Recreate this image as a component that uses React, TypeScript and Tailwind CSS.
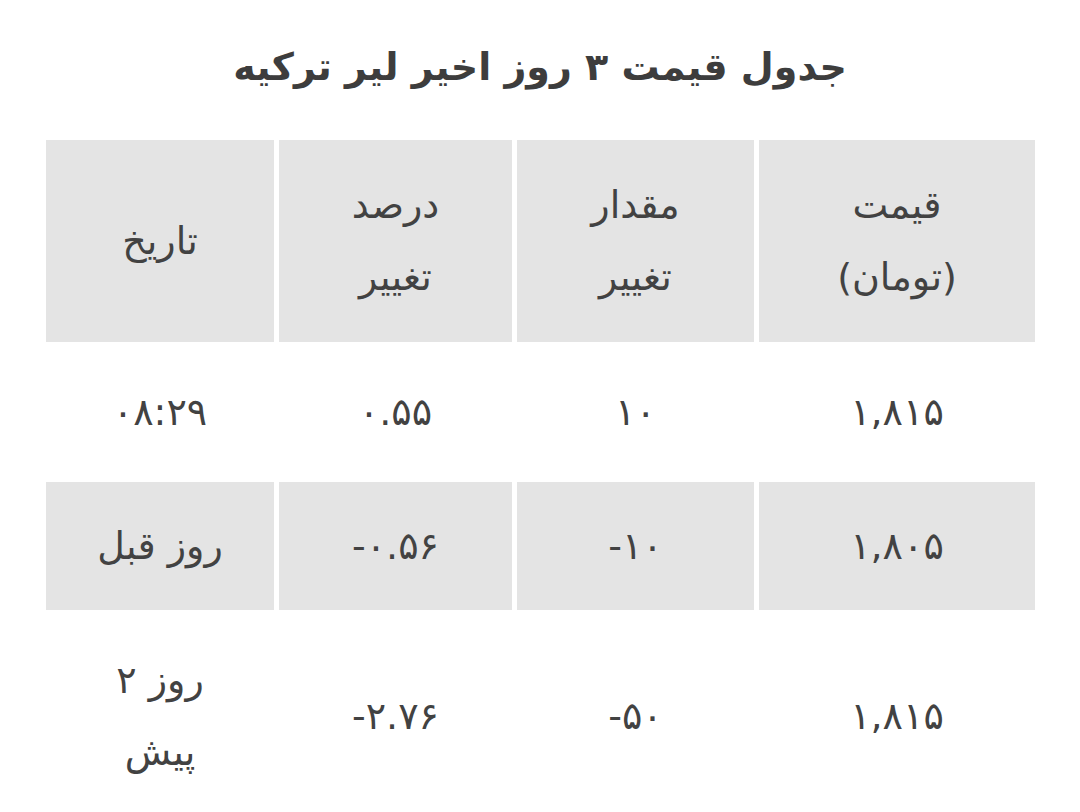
const rows = [
  { price: "۱,۸۱۵", change: "۱۰", percent: "۰.۵۵", date: "۰۸:۲۹", shaded: false },
  { price: "۱,۸۰۵", change: "-۱۰", percent: "-۰.۵۶", date: "روز قبل", shaded: true },
  { price: "۱,۸۱۵", change: "-۵۰", percent: "-۲.۷۶", date: "روز ۲ پیش", shaded: false },
];

const cell = "px-[24px] text-center align-middle font-normal leading-[72px]";

export default function App() {
  return (
    <div
      dir="rtl"
      className="min-h-screen bg-white px-[40px] text-[#424242]"
      style={{ fontFamily: '"DejaVu Sans", "Noto Sans", sans-serif' }}
    >
      <h1 className="pt-[36px] pb-[36px] text-center text-[38px] font-bold leading-[62px] text-[#3d3d3d]">
        جدول قیمت ۳ روز اخیر لیر ترکیه
      </h1>
      <table className="w-[999px] table-fixed border-separate border-spacing-x-[5px] border-spacing-y-[6px] text-[38px]">
        <colgroup>
          <col className="w-[276px]" />
          <col className="w-[237px]" />
          <col className="w-[233px]" />
          <col className="w-[228px]" />
        </colgroup>
        <thead>
          <tr className="bg-[#e4e4e4]">
            <th className={`${cell} py-[29px]`}>
              قیمت
              <br />
              (تومان)
            </th>
            <th className={`${cell} py-[29px]`}>
              مقدار
              <br />
              تغییر
            </th>
            <th className={`${cell} py-[29px]`}>
              درصد
              <br />
              تغییر
            </th>
            <th className={`${cell} py-[29px]`}>تاریخ</th>
          </tr>
        </thead>
        <tbody>
          {rows.map((r, i) => (
            <tr key={i} className={r.shaded ? "bg-[#e4e4e4]" : "bg-white"}>
              <td className={`${cell} py-[28px]`}>{r.price}</td>
              <td className={`${cell} py-[28px]`}>
                <span dir="ltr">{r.change}</span>
              </td>
              <td className={`${cell} py-[28px]`}>
                <span dir="ltr">{r.percent}</span>
              </td>
              <td className={`${cell} py-[28px]`}>
                {r.date === "روز ۲ پیش" ? (
                  <>
                    روز ۲
                    <br />
                    پیش
                  </>
                ) : (
                  r.date
                )}
              </td>
            </tr>
          ))}
        </tbody>
      </table>
    </div>
  );
}
